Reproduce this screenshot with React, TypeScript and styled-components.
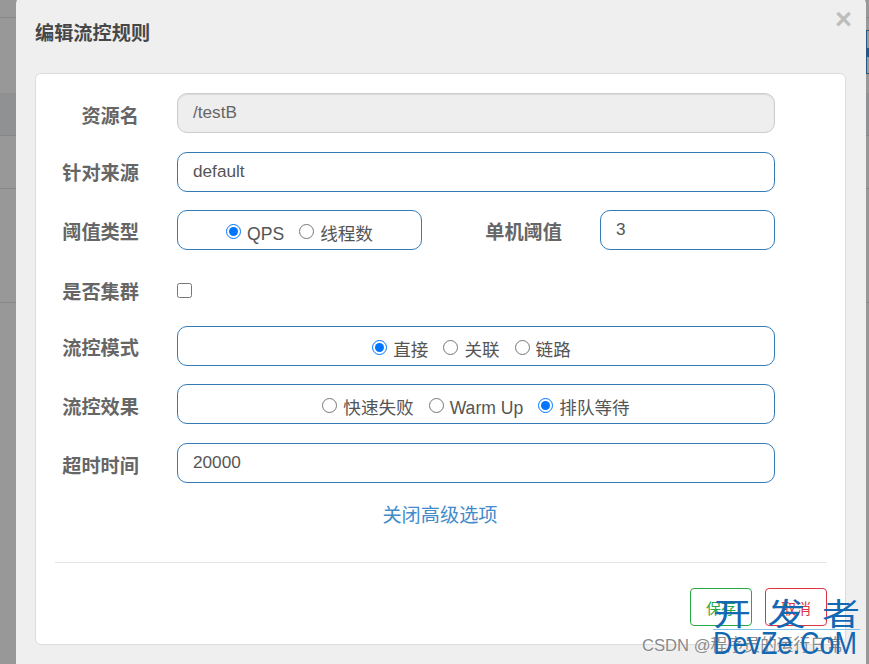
import React from "react";
import styled, { createGlobalStyle } from "styled-components";

const CJK = `"Liberation Sans", "Noto Sans CJK SC", sans-serif`;

const Global = createGlobalStyle`
  html, body { margin: 0; padding: 0; background: #999; }
  * { box-sizing: border-box; }
`;

const Page = styled.div`
  position: relative;
  width: 869px;
  height: 664px;
  overflow: hidden;
  background: #989898;
  font-family: ${CJK};
`;

const BackdropRow = styled.div<{ $h: number; $band?: boolean; $plain?: boolean }>`
  height: ${(p) => p.$h}px;
  border-bottom: ${(p) => (p.$plain ? "none" : "1px solid #868686")};
  background: ${(p) => (p.$band ? "#8f9193" : "transparent")};
`;

const PageAction = styled.div`
  position: absolute;
  left: 866px;
  top: 30px;
  width: 40px;
  height: 44px;
  border: 1px solid #27567f;
  &::before {
    content: "";
    position: absolute;
    left: 0;
    top: 17px;
    width: 2px;
    height: 9px;
    background: #27567f;
  }
`;

const Dialog = styled.div`
  position: absolute;
  left: 16px;
  top: -4px;
  width: 850px;
  height: 690px;
  background: #efefef;
  border-radius: 8px;
  padding: 0 21px 0 19px;
  display: flex;
  flex-direction: column;
`;

const Title = styled.h3`
  margin: 0;
  height: 77px;
  padding-top: 24px;
  font-size: 19.2px;
  line-height: 28px;
  font-weight: 700;
  color: #474747;
`;

const Close = styled.span`
  position: absolute;
  right: 14px;
  top: 8px;
  font-size: 29px;
  line-height: 30px;
  font-weight: 700;
  color: #bdbdbd;
`;

const Panel = styled.div`
  width: 811px;
  height: 572px;
  background: #fff;
  border: 1px solid #dcdcdc;
  border-radius: 6px;
  padding: 19px 18px 0 18px;
  display: flex;
  flex-direction: column;
`;

const Form = styled.div`
  display: flex;
  flex-direction: column;
`;

const Row = styled.div<{ $top?: number }>`
  display: flex;
  align-items: center;
  height: 40px;
  margin-top: ${(p) => p.$top ?? 0}px;
`;

const Label = styled.label<{ $width?: number; $left?: number; $drop?: number }>`
  width: ${(p) => p.$width ?? 85}px;
  margin-left: ${(p) => p.$left ?? 0}px;
  margin-right: 38px;
  flex: none;
  text-align: right;
  white-space: nowrap;
  font-size: 19.2px;
  line-height: 28px;
  font-weight: 700;
  color: #666;
  position: relative;
  top: ${(p) => p.$drop ?? 3}px;
`;

const TextInput = styled.input<{ $width?: number }>`
  width: ${(p) => p.$width ?? 598}px;
  height: 40px;
  flex: none;
  padding: 0 15px 2px;
  font: 400 17.2px ${CJK};
  color: #555;
  background: #fff;
  border: 1px solid #337ab7;
  border-radius: 10px;
  outline: none;
  &:disabled {
    background: #eee;
    border-color: #ccc;
    color: #666;
    box-shadow: inset 0 1px 1px rgba(0, 0, 0, 0.08);
  }
`;

const RadioGroup = styled.div<{ $width?: number; $trail?: number }>`
  width: ${(p) => p.$width ?? 598}px;
  height: 40px;
  flex: none;
  display: flex;
  align-items: center;
  justify-content: center;
  gap: 15px;
  padding-right: ${(p) => p.$trail ?? 0}px;
  border: 1px solid #337ab7;
  border-radius: 10px;
`;

const RadioLabel = styled.label`
  display: flex;
  align-items: center;
  gap: 6px;
  font-size: 17.6px;
  line-height: 24px;
  color: #555;
  padding-top: 8px;
`;

const Radio = styled.input.attrs({ type: "radio" })`
  width: 15px;
  height: 15px;
  margin: 0;
  position: relative;
  top: -3px;
`;

const Check = styled.input.attrs({ type: "checkbox" })`
  width: 15px;
  height: 15px;
  margin: 0;
  position: relative;
  top: 2px;
`;

const LinkRow = styled.div`
  height: 28px;
  margin-top: 19px;
  text-align: center;
  font-size: 19.2px;
  line-height: 28px;
  color: #428bca;
  margin-left: -1px;
`;

const Divider = styled.hr`
  width: 772px;
  margin: 32px 0 0 1px;
  border: 0;
  border-top: 1px solid #e5e5e5;
`;

const Footer = styled.div`
  display: flex;
  justify-content: flex-end;
  gap: 13px;
  width: 772px;
  margin: 25px 0 0 1px;
`;

const Btn = styled.button<{ $color: string }>`
  width: 62px;
  height: 38px;
  padding: 0;
  background: #fff;
  border: 1px solid ${(p) => p.$color};
  border-radius: 4px;
  color: ${(p) => p.$color};
  font: 400 15px ${CJK};
`;

const Watermark = styled.div`
  position: absolute;
  left: 713px;
  top: 596px;
  width: 147px;
  color: #1268b3;
  pointer-events: none;
`;

const WatermarkTitle = styled.div`
  display: flex;
  justify-content: space-between;
  height: 34px;
  font-size: 38px;
  line-height: 33px;
  font-weight: 400;
  border-bottom: 1px solid #7cc4e8;
`;

const WatermarkGlyph = styled.span`
  display: inline-block;
  transform: scaleY(0.8);
  transform-origin: 50% 90%;
`;

const WatermarkDomain = styled.div`
  font-size: 31px;
  line-height: 28px;
  white-space: nowrap;
  transform: scaleX(0.87);
  transform-origin: 0 50%;
`;

const Credit = styled.div`
  position: absolute;
  left: 642px;
  top: 636px;
  font-size: 16.6px;
  line-height: 20px;
  white-space: nowrap;
  color: #8a8a8a;
  text-shadow: 0 0 2px #fff;
  pointer-events: none;
`;

export default function App() {
  return (
    <Page>
      <Global />
      <BackdropRow $h={18} />
      <BackdropRow $h={75} $plain />
      <BackdropRow $h={43} $band />
      <BackdropRow $h={53} />
      <BackdropRow $h={114} />
      <PageAction />
      <Dialog>
        <Title>编辑流控规则</Title>
        <Close>×</Close>
        <Panel>
          <Form>
            <Row>
              <Label $drop={4}>资源名</Label>
              <TextInput disabled defaultValue="/testB" />
            </Row>
            <Row $top={19}>
              <Label $drop={2}>针对来源</Label>
              <TextInput defaultValue="default" />
            </Row>
            <Row $top={18}>
              <Label>阈值类型</Label>
              <RadioGroup $width={245}>
                <RadioLabel>
                  <Radio name="grade" defaultChecked />
                  QPS
                </RadioLabel>
                <RadioLabel>
                  <Radio name="grade" />
                  线程数
                </RadioLabel>
              </RadioGroup>
              <Label $width={78} $left={62}>单机阈值</Label>
              <TextInput $width={175} defaultValue="3" />
            </Row>
            <Row $top={18}>
              <Label $drop={5}>是否集群</Label>
              <Check />
            </Row>
            <Row $top={18}>
              <Label>流控模式</Label>
              <RadioGroup $trail={9}>
                <RadioLabel>
                  <Radio name="mode" defaultChecked />
                  直接
                </RadioLabel>
                <RadioLabel>
                  <Radio name="mode" />
                  关联
                </RadioLabel>
                <RadioLabel>
                  <Radio name="mode" />
                  链路
                </RadioLabel>
              </RadioGroup>
            </Row>
            <Row $top={18}>
              <Label $drop={4}>流控效果</Label>
              <RadioGroup>
                <RadioLabel>
                  <Radio name="effect" />
                  快速失败
                </RadioLabel>
                <RadioLabel>
                  <Radio name="effect" />
                  Warm Up
                </RadioLabel>
                <RadioLabel>
                  <Radio name="effect" defaultChecked />
                  排队等待
                </RadioLabel>
              </RadioGroup>
            </Row>
            <Row $top={19}>
              <Label $drop={4}>超时时间</Label>
              <TextInput defaultValue="20000" />
            </Row>
          </Form>
          <LinkRow>关闭高级选项</LinkRow>
          <Divider />
          <Footer>
            <Btn $color="#28a745">保存</Btn>
            <Btn $color="#dc3545">取消</Btn>
          </Footer>
        </Panel>
      </Dialog>
      <Credit>CSDN @程序员的运行日常</Credit>
      <Watermark>
        <WatermarkTitle>
          <WatermarkGlyph>开</WatermarkGlyph>
          <WatermarkGlyph>发</WatermarkGlyph>
          <WatermarkGlyph>者</WatermarkGlyph>
        </WatermarkTitle>
        <WatermarkDomain>DevZe.CoM</WatermarkDomain>
      </Watermark>
    </Page>
  );
}
